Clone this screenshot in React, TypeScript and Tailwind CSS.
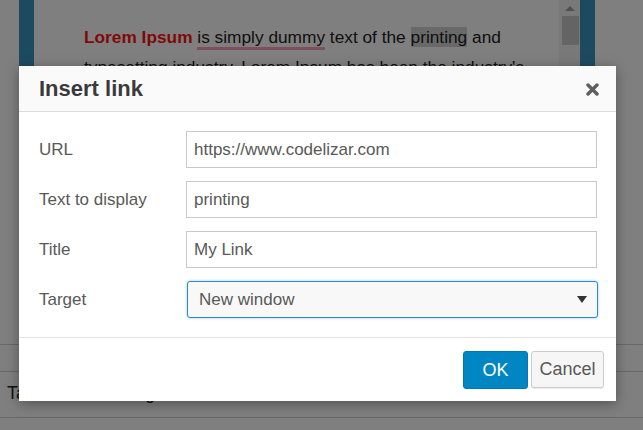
import React from 'react';

// ── Background editor page (dimmed by the modal overlay) ───────────────────────

function EditorBackdrop() {
  return (
    <div className="flex flex-col w-full h-full bg-white font-['Liberation_Sans',Arial,sans-serif]">
      <div className="flex h-[330px]">
        <div className="w-[19px]" />
        <div className="w-[15px] bg-[#3c94c0]" />
        <div className="w-[525px] pl-[50px] pr-2 pt-[22px] text-[17.3px] leading-[30px] text-[#222]">
          <p>
            <span className="font-bold text-[#ff1010]">Lorem Ipsum</span>{' '}
            <span className="border-b-[3px] border-[#ff9dbb]">is simply dummy</span> text of the{' '}
            <span className="bg-[#d2d2d2]">printing</span> and typesetting industry. Lorem Ipsum has been the
            industry's standard dummy text ever since the 1500s, when an unknown printer took a galley of type.
          </p>
        </div>
        <div className="w-[21px] bg-[#f2f2f2] flex flex-col items-center">
          <div className="h-[16px] flex items-center justify-center">
            <div className="w-0 h-0 border-l-[5px] border-r-[5px] border-b-[5px] border-l-transparent border-r-transparent border-b-[#a3a3a3]" />
          </div>
          <div className="ml-[2px] w-[17px] h-[29px] bg-[#c8c8c8]" />
        </div>
        <div className="w-[15px] bg-[#3c94c0]" />
        <div className="flex-1" />
      </div>
      <div className="h-[14px]" />
      <div className="border-t border-[#cfcfcf] h-[27px]" />
      <div className="border-t border-[#cfcfcf] h-[46px] flex items-end pb-[10px] pl-[7px] text-[18px] text-[#222]">
        Table width setting
      </div>
      <div className="border-t border-[#cfcfcf] flex-1" />
    </div>
  );
}

// ── Insert link dialog ─────────────────────────────────────────────────────────

function Field({ label, value }: { label: string; value: string }) {
  return (
    <div className="flex items-center">
      <label className="w-[147px] text-[17px] text-[#595959]">{label}</label>
      <div className="w-[411px] h-[37px] border border-[#c9c9c9] bg-white pl-[7px] flex items-center text-[17px] text-[#595959]">
        {value}
      </div>
    </div>
  );
}

function InsertLinkDialog() {
  return (
    <div className="absolute left-[19px] top-[66px] w-[597px] h-[335px] bg-white shadow-[0_3px_12px_rgba(0,0,0,0.35)] flex flex-col font-['Liberation_Sans',Arial,sans-serif]">
      <div className="h-[46px] bg-[#fafafa] border-b border-[#dcdcdc] flex items-center justify-between pl-[20px] pr-[17px]">
        <h2 className="text-[22px] font-bold text-[#3a3a3a]">Insert link</h2>
        <svg width="13" height="13" viewBox="0 0 13 13" className="mt-[2px]">
          <path d="M2 2 L11 11 M11 2 L2 11" stroke="#5f5f5f" strokeWidth="3.4" strokeLinecap="round" />
        </svg>
      </div>

      <div className="flex flex-col gap-[13px] pl-[20px] pt-[19px] pb-[19px]">
        <Field label="URL" value="https://www.codelizar.com" />
        <Field label="Text to display" value="printing" />
        <Field label="Title" value="My Link" />
        <div className="flex items-center">
          <label className="w-[148px] text-[17px] text-[#595959]">Target</label>
          <div className="w-[411px] h-[37px] rounded-[3px] border border-[#2d88d4] shadow-[0_0_3px_rgba(45,136,212,0.45)] bg-[#f8f8f8] pl-[11px] pr-[10px] flex items-center justify-between text-[17px] text-[#595959]">
            <span>New window</span>
            <div className="w-0 h-0 border-l-[5px] border-r-[5px] border-t-[7px] border-l-transparent border-r-transparent border-t-[#333]" />
          </div>
        </div>
      </div>

      <div className="border-t border-[#e2e2e2] flex-1 flex items-start justify-end gap-[3px] pt-[13px] pr-[12px]">
        <button className="w-[65px] h-[38px] rounded-[3px] bg-[#0087c3] border border-[#0079b0] text-white text-[18px]">
          OK
        </button>
        <button className="w-[73px] h-[37px] rounded-[3px] bg-[#f6f6f6] border border-[#cccccc] shadow-[0_1px_0_rgba(0,0,0,0.08)] text-[#595959] text-[18px]">
          Cancel
        </button>
      </div>
    </div>
  );
}

export default function App() {
  return (
    <div className="relative w-[643px] h-[430px] overflow-hidden">
      <EditorBackdrop />
      <div className="absolute inset-0 bg-black/50" />
      <InsertLinkDialog />
    </div>
  );
}
